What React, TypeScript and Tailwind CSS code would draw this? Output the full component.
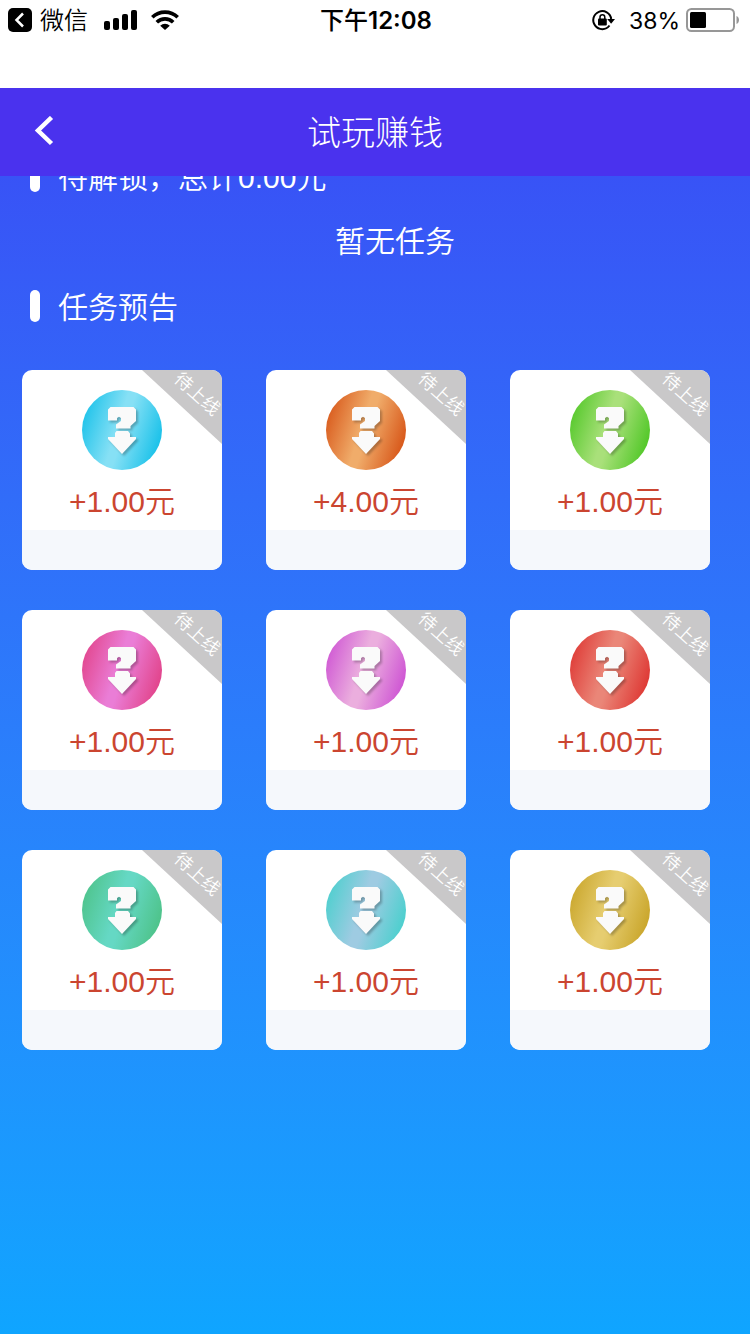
type Task = { amount: string; edge: string; glow: string };

const tasks: Task[] = [
  { amount: "1.00", edge: "#1fc3ea", glow: "#86e0f5" },
  { amount: "4.00", edge: "#d95c1e", glow: "#f0ac6a" },
  { amount: "1.00", edge: "#57c92d", glow: "#a9e07a" },
  { amount: "1.00", edge: "#e2478f", glow: "#ea7dd6" },
  { amount: "1.00", edge: "#d05ad4", glow: "#ebaede" },
  { amount: "1.00", edge: "#df3d38", glow: "#ea8678" },
  { amount: "1.00", edge: "#4fc48d", glow: "#65d8c4" },
  { amount: "1.00", edge: "#50cfcf", glow: "#9ecbe2" },
  { amount: "1.00", edge: "#cba82f", glow: "#e6cd70" },
];

function IconSignal() {
  return (
    <svg className="h-5 w-[33px]" viewBox="0 0 33 20" aria-hidden="true">
      <rect x="0" y="11" width="6" height="9" rx="2" />
      <rect x="9" y="8" width="6" height="12" rx="2" />
      <rect x="18" y="4" width="6" height="16" rx="2" />
      <rect x="27" y="0" width="6" height="20" rx="2" />
    </svg>
  );
}

function IconWifi() {
  return (
    <svg className="h-5 w-7" viewBox="0 0 28 20" fill="none" stroke="#000" strokeWidth="3.6" aria-hidden="true">
      <path d="M1.300 7.300a18.200 18.200 0 0 1 25.400 0" />
      <path d="M5.800 12.300a11.600 11.600 0 0 1 16.400 0" />
      <path d="M14 20l-4.800-4.300a7 7 0 0 1 9.600 0z" fill="#000" stroke="none" />
    </svg>
  );
}

function IconRotationLock() {
  return (
    <svg className="h-[22px] w-6" viewBox="0 0 24 22" fill="none" stroke="#000" aria-hidden="true">
      <path d="M18.500 16.500a9 9 0 1 1 1.700-6.500" strokeWidth="2" />
      <path d="M16.200 10h7.800l-3.900 4.800z" fill="#000" stroke="none" />
      <rect x="7" y="9.600" width="8.800" height="6.800" rx="1" fill="#000" stroke="none" />
      <path d="M9 10V8.200a2.400 2.400 0 0 1 4.800 0V10" strokeWidth="1.500" />
    </svg>
  );
}

function IconBattery() {
  return (
    <svg className="h-6 w-[54px]" viewBox="0 0 54 24" aria-hidden="true">
      <rect x="1" y="1" width="47" height="22" rx="4.500" fill="#fff" stroke="#979797" strokeWidth="2" />
      <rect x="4" y="4" width="16" height="16" rx="1.500" />
      <path d="M50.500 8v8c2-1 2.500-2.600 2.500-4s-.5-3-2.500-4z" fill="#979797" />
    </svg>
  );
}

function StatusBar() {
  return (
    <div className="grid h-[88px] grid-cols-3 items-start bg-white pr-1.5 pl-2 text-black">
      <div className="flex h-10 items-center">
        <svg className="size-6" viewBox="0 0 24 24" aria-hidden="true">
          <rect width="24" height="24" rx="5" />
          <path d="M15 5.500L8.500 12l6.500 6.500" fill="none" stroke="#fff" strokeWidth="2.500" />
        </svg>
        <span className="ml-2 pt-0.5 text-2xl font-[350]">微信</span>
        <span className="ml-4">
          <IconSignal />
        </span>
        <span className="ml-3.5">
          <IconWifi />
        </span>
      </div>
      <div className="flex h-10 items-center justify-center pt-0.5 font-[Inter,'Noto_Sans_CJK_SC',sans-serif] text-2xl font-semibold">
        <span className="font-medium">下午</span>12:08
      </div>
      <div className="flex h-10 items-center justify-end pr-1">
        <IconRotationLock />
        <span className="mr-1.5 ml-3.5 pt-0.5 font-[Inter,sans-serif] text-[23px]">38%</span>
        <IconBattery />
      </div>
    </div>
  );
}

function SectionTitle({ children }: { children: string }) {
  return (
    <h2 className="flex h-8 items-center gap-[18px] pl-[30px] text-[30px] leading-8 font-[350] text-white">
      <span className="h-8 w-2.5 rounded-full bg-white" />
      <span className="pt-1">{children}</span>
    </h2>
  );
}

function MysteryIcon({ edge, glow }: { edge: string; glow: string }) {
  return (
    <div
      className="size-20 rounded-full"
      style={{ backgroundImage: `linear-gradient(108deg, ${edge} 8%, ${glow} 45%, ${glow} 52%, ${edge} 88%)` }}
    >
      <svg
        className="size-20 drop-shadow-[2px_2px_1px_rgba(0,0,0,0.25)]"
        viewBox="0 0 80 80"
        fill="#fafafa"
        aria-hidden="true"
      >
        <path d="M26 19.500L28.500 17H51.500L54 19.500V31L48.500 36V38.500H34V34.500L39 31V28L37 26.800L35 28V30.500H26z" />
        <path d="M34.500 41H46L48 43.500V47H54V49L40 64L26 49V47H33V43z" />
      </svg>
    </div>
  );
}

function TaskCard({ task }: { task: Task }) {
  return (
    <li className="relative overflow-hidden rounded-[10px] bg-white">
      <div className="flex h-40 flex-col items-center pt-5">
        <MysteryIcon edge={task.edge} glow={task.glow} />
        <p className="mt-2.5 text-[30px] leading-11 font-[350] text-[#cb4530]">
          +{task.amount}元
        </p>
      </div>
      <div className="h-10 bg-[#f5f8fc]" />
      {/* Ruban d'angle */}
      <div className="absolute top-0 right-0 h-[74px] w-20 bg-[#c9c8c9] [clip-path:polygon(0_0,100%_0,100%_100%)]">
        <span className="absolute top-2 left-7 block rotate-42 text-lg leading-8 font-[350] whitespace-nowrap text-white">
          待上线
        </span>
      </div>
    </li>
  );
}

export default function App() {
  return (
    <div className="flex min-h-screen flex-col font-['Liberation_Sans','Noto_Sans_CJK_SC',sans-serif]">
      <StatusBar />
      <header className="grid h-[88px] grid-cols-[88px_1fr_88px] items-center bg-[#4a32ee] text-white">
        <button type="button" aria-label="返回" className="flex h-full items-center pl-[34px]">
          <svg className="h-8 w-5" viewBox="0 0 20 32" fill="none" stroke="#fff" strokeWidth="4.500" aria-hidden="true">
            <path d="M17.500 1.500L4 14.500L17.500 27.500" />
          </svg>
        </button>
        <h1 className="pt-0.5 text-center text-[34px] font-light">试玩赚钱</h1>
      </header>
      <main className="flex-1 overflow-hidden bg-linear-to-b from-[#3853f6] to-[#0fa5ff] pb-10">
        <div className="-mt-4">
          <SectionTitle>待解锁，总计0.00元</SectionTitle>
          <p className="pt-[29px] pb-[27px] pl-10 text-center text-[30px] leading-[42px] font-[350] text-white">
            暂无任务
          </p>
          <SectionTitle>任务预告</SectionTitle>
          <ul className="mt-12 grid grid-cols-3 gap-x-11 gap-y-10 pr-10 pl-[22px]">
            {tasks.map((task, i) => (
              <TaskCard key={i} task={task} />
            ))}
          </ul>
        </div>
      </main>
    </div>
  );
}
